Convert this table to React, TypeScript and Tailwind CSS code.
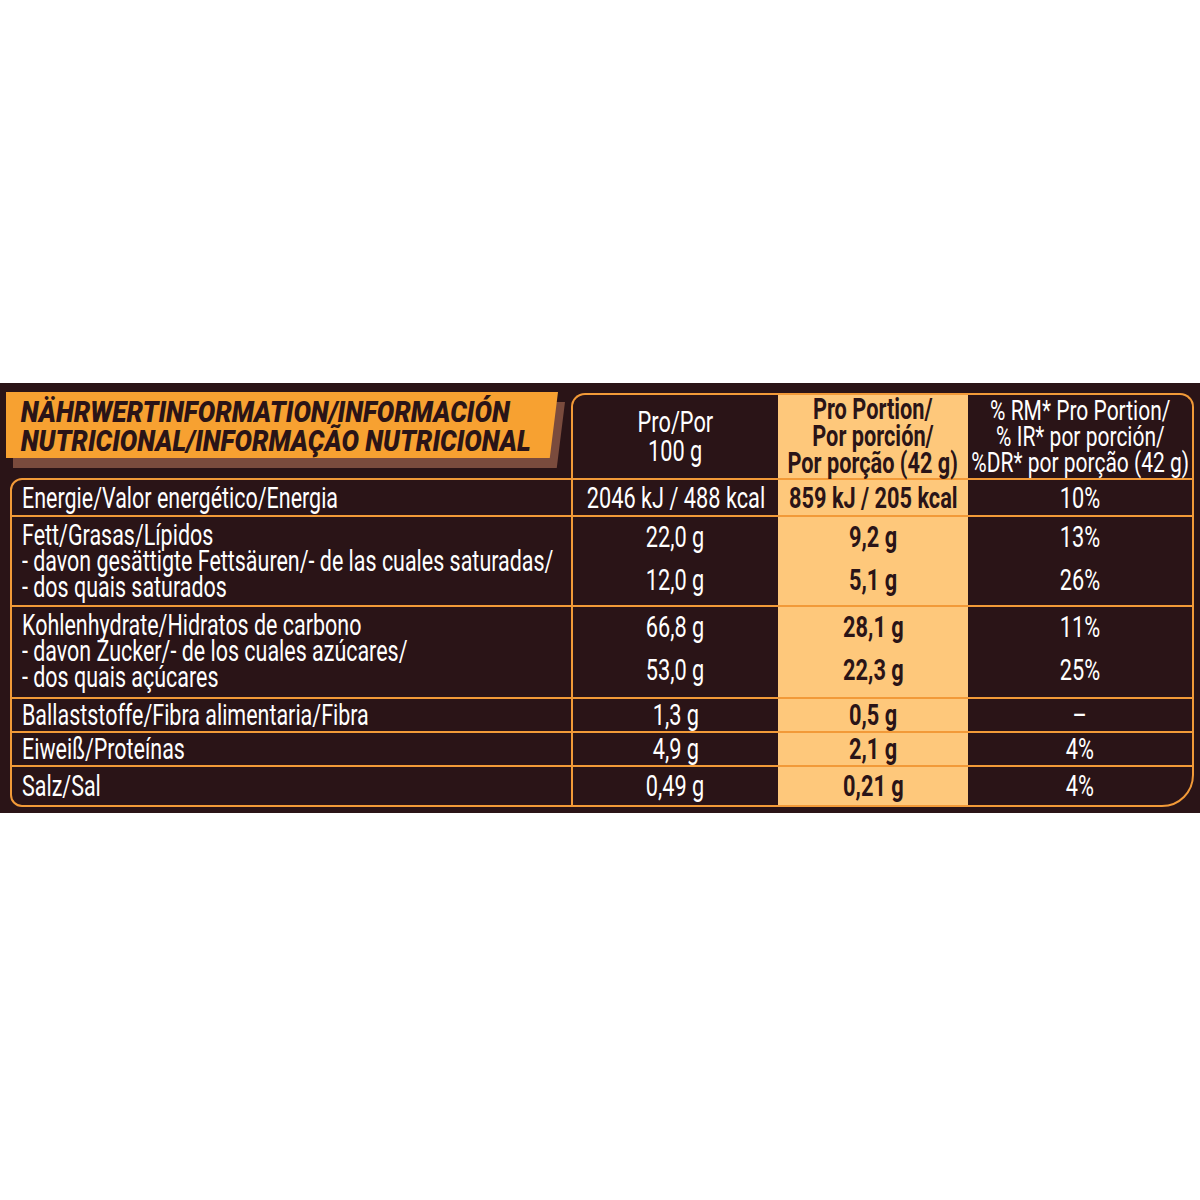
const rows = [
  {
    labels: ['Energie/Valor energético/Energia'],
    values: [['2046 kJ / 488 kcal', '859 kJ / 205 kcal', '10%']],
    height: 'h-[35px]',
  },
  {
    labels: [
      'Fett/Grasas/Lípidos',
      '- davon gesättigte Fettsäuren/- de las cuales saturadas/',
      '- dos quais saturados',
    ],
    values: [
      ['22,0 g', '9,2 g', '13%'],
      ['12,0 g', '5,1 g', '26%'],
    ],
    height: 'h-[88px]',
  },
  {
    labels: [
      'Kohlenhydrate/Hidratos de carbono',
      '- davon Zucker/- de los cuales azúcares/',
      '- dos quais açúcares',
    ],
    values: [
      ['66,8 g', '28,1 g', '11%'],
      ['53,0 g', '22,3 g', '25%'],
    ],
    height: 'h-[90px]',
  },
  {
    labels: ['Ballaststoffe/Fibra alimentaria/Fibra'],
    values: [['1,3 g', '0,5 g', '–']],
    height: 'h-[32px]',
  },
  {
    labels: ['Eiweiß/Proteínas'],
    values: [['4,9 g', '2,1 g', '4%']],
    height: 'h-[32px]',
  },
  {
    labels: ['Salz/Sal'],
    values: [['0,49 g', '0,21 g', '4%']],
    height: 'h-[38px]',
  },
];

function ValueCell({ items, dark, multi }: { items: string[]; dark?: boolean; multi: boolean }) {
  return (
    <div
      className={`flex flex-col items-center ${
        multi ? 'justify-start pt-[5px] gap-[13px]' : 'justify-center'
      } ${dark ? 'bg-[#fec87b] text-[#2a1417] font-bold' : 'text-white'}`}
    >
      {items.map((v, i) => (
        <div key={i} className="whitespace-nowrap scale-x-[0.75] text-[29px] leading-[30px]">
          {v}
        </div>
      ))}
    </div>
  );
}

export default function App() {
  return (
    <div className="h-[1200px] bg-white pt-[383px] font-['Roboto',sans-serif]">
      <div className="h-[430px] bg-[#2a1417] pt-[7px] pl-[10px]">
        {/* header */}
        <div className="flex h-[88px]">
          <div className="relative w-[561px]">
            <div className="absolute left-[3px] top-[12px] h-[66px] w-[552px] bg-[#7a4b3d] [clip-path:polygon(0_0,100%_0,98.5%_100%,0_100%)]" />
            <div className="absolute -left-[4px] top-[2px] h-[66px] w-[552px] bg-[#f7a131] [clip-path:polygon(0_0,100%_0,98.5%_100%,0_100%)]">
              <div className="origin-left scale-x-[0.87] pl-[17px] pt-[5px] text-[30px] font-black italic leading-[29px] text-[#2a1417] whitespace-nowrap">
                <div>NÄHRWERTINFORMATION/INFORMACIÓN</div>
                <div>NUTRICIONAL/INFORMAÇÃO NUTRICIONAL</div>
              </div>
            </div>
          </div>
          <div className="mt-[3px] grid h-[85px] w-[623px] grid-cols-[205px_190px_224px] rounded-t-[14px] border-2 border-b-0 border-[#f29a38]">
            <div className="flex flex-col items-center justify-center text-[29px] leading-[29px] text-white">
              <div className="whitespace-nowrap scale-x-[0.75]">Pro/Por</div>
              <div className="whitespace-nowrap scale-x-[0.75]">100 g</div>
            </div>
            <div className="flex flex-col items-center justify-center bg-[#fec87b] text-[29px] font-bold leading-[27px] text-[#2a1417]">
              <div className="whitespace-nowrap scale-x-[0.75]">Pro Portion/</div>
              <div className="whitespace-nowrap scale-x-[0.75]">Por porción/</div>
              <div className="whitespace-nowrap scale-x-[0.75]">Por porção (42 g)</div>
            </div>
            <div className="flex flex-col items-center justify-center text-[28px] leading-[26px] text-white">
              <div className="whitespace-nowrap scale-x-[0.75]">% RM* Pro Portion/</div>
              <div className="whitespace-nowrap scale-x-[0.75]">% IR* por porción/</div>
              <div className="whitespace-nowrap scale-x-[0.75]">%DR* por porção (42 g)</div>
            </div>
          </div>
        </div>

        {/* body */}
        <div className="w-[1184px] overflow-hidden rounded-tl-[12px] rounded-bl-[12px] rounded-br-[32px] border-2 border-[#f29a38]">
          {rows.map((row, ri) => {
            const multi = row.values.length > 1;
            return (
              <div
                key={ri}
                className={`grid grid-cols-[561px_205px_190px_224px] ${row.height} ${
                  ri > 0 ? 'box-content border-t-2 border-[#f29a38]' : ''
                }`}
              >
                <div
                  className={`flex flex-col border-r-2 border-[#f29a38] pl-[10px] text-white ${
                    multi ? 'justify-start pt-[5px]' : 'justify-center'
                  }`}
                >
                  {row.labels.map((l, li) => (
                    <div
                      key={li}
                      className="origin-left scale-x-[0.74] whitespace-nowrap text-[29px] leading-[26px]"
                    >
                      {l}
                    </div>
                  ))}
                </div>
                <ValueCell items={row.values.map((v) => v[0])} multi={multi} />
                <ValueCell items={row.values.map((v) => v[1])} multi={multi} dark />
                <ValueCell items={row.values.map((v) => v[2])} multi={multi} />
              </div>
            );
          })}
        </div>
      </div>
    </div>
  );
}
